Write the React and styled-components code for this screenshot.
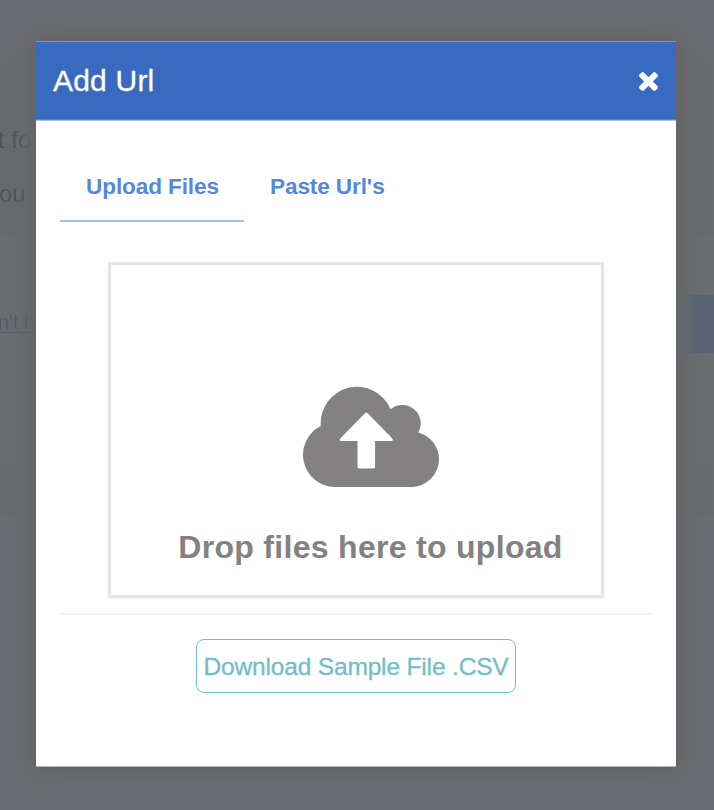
import React from "react";
import styled, { createGlobalStyle } from "styled-components";

const GlobalStyle = createGlobalStyle`
  * { box-sizing: border-box; }
  body {
    margin: 0;
    font-family: "Liberation Sans", Arial, sans-serif;
    overflow: hidden;
  }
`;

const Page = styled.div`
  position: relative;
  width: 714px;
  height: 810px;
  overflow: hidden;
  background: #6a6d71;
`;

const Backdrop = styled.div`
  position: absolute;
  inset: 0;
  display: grid;
  grid-template-rows: 57px 180px 226px 54px 1fr;
`;

const Band = styled.section`
  position: relative;
  background: ${(p) => p.$tone};
`;

const Behind = styled.span`
  position: absolute;
  left: ${(p) => p.$x}px;
  top: ${(p) => p.$y}px;
  font-size: ${(p) => p.$size}px;
  line-height: 28px;
  white-space: nowrap;
  color: transparent;
  background: linear-gradient(to right, ${(p) => p.$color || "#505357"} 20px, #666768 36px);
  background-clip: text;
  -webkit-background-clip: text;
  text-decoration: ${(p) => (p.$underline ? "underline #5a616b" : "none")};
  text-decoration-thickness: 1px;
  text-underline-offset: 3px;
`;

const BehindButton = styled.div`
  position: absolute;
  right: 0;
  top: 58px;
  width: 34px;
  height: 58px;
  background: linear-gradient(to right, #676a6e00, #5b6474 45%, #596476);
`;

const Overlay = styled.div`
  position: relative;
  padding: 41px 38px 43px 36px;
`;

const Dialog = styled.div`
  width: 640px;
  height: 726px;
  background: #fff;
  border-bottom: 1px solid #b5b6b7;
  box-shadow: 0 0 22px 4px rgba(98, 97, 97, 0.95);
`;

const Header = styled.header`
  display: flex;
  align-items: center;
  justify-content: space-between;
  height: 80px;
  padding: 0 18px 0 17px;
  background: #386bc0;
  border-top: 1px solid #7d94b9;
  border-bottom: 1px solid #a9bfe5;
  box-shadow: inset 0 -1px 0 #5a84cc;
`;

const Title = styled.h1`
  margin: 0;
  font-size: 30px;
  font-weight: 400;
  line-height: 40px;
  letter-spacing: 0.2px;
  -webkit-text-stroke: 0.3px #fff;
  color: #fff;
`;

const CloseButton = styled.button`
  display: flex;
  margin: 0;
  padding: 0;
  border: 0;
  background: none;
  color: #fff;
`;

const Body = styled.main`
  padding: 29px 24px 0;
`;

const Tabs = styled.nav`
  display: flex;
  height: 72px;
`;

const Tab = styled.a`
  padding: 22px 26px 0;
  font-size: 22.6px;
  font-weight: 700;
  line-height: 30px;
  letter-spacing: -0.12px;
  white-space: nowrap;
  color: #5588dc;
  border-bottom: 2px solid ${(p) => (p.$active ? "#a3c0ec" : "transparent")};
  width: ${(p) => (p.$active ? "184px" : "auto")};
`;

const DropZone = styled.section`
  display: flex;
  flex-direction: column;
  align-items: center;
  width: 496px;
  height: 336px;
  margin: 40px auto 0;
  padding: 121px 0 0 29px;
  border: 3px solid #e4e4e4;
`;

const DropLabel = styled.p`
  margin: 39px 0 0;
  font-size: 32px;
  font-weight: 700;
  line-height: 40px;
  letter-spacing: 0.3px;
  white-space: nowrap;
  color: #838182;
`;

const Divider = styled.hr`
  height: 2px;
  margin: 15px 0 24px;
  border: 0;
  background: #f5f5f5;
`;

const Download = styled.button`
  display: flex;
  align-items: center;
  justify-content: center;
  width: 320px;
  height: 54px;
  margin: 0 auto;
  padding: 2px 0 0;
  border: 1px solid #73bfcc;
  border-radius: 8px;
  background: #fff;
  font-family: inherit;
  font-size: 24.5px;
  letter-spacing: -0.16px;
  -webkit-text-stroke: 0.3px #73bccb;
  white-space: nowrap;
  color: #73bccb;
`;

function CloseIcon() {
  return (
    <svg width="19" height="19" viewBox="302 366 1188 1188" fill="currentColor">
      <path d="M1490 1322q0 40-28 68l-136 136q-28 28-68 28t-68-28l-294-294-294 294q-28 28-68 28t-68-28l-136-136q-28-28-28-68t28-68l294-294-294-294q-28-28-28-68t28-68l136-136q28-28 68-28t68 28l294 294 294-294q28-28 68-28t68 28l136 136q28 28 28 68t-28 68l-294 294 294 294q28 28 28 68z" />
    </svg>
  );
}

function CloudUploadIcon() {
  return (
    <svg width="138" height="102" viewBox="302 386 138 102">
      <path
        fill="#838182"
        d="M334.5 487A32.2 32.2 0 0 1 320.8 426A36.3 36.3 0 0 1 390.5 409.2A18.4 18.4 0 0 1 418.3 432.4A27.8 27.8 0 0 1 439 459.2A27.8 27.8 0 0 1 411.2 487Z"
      />
      <path
        fill="#fff"
        d="M365.2 413.1Q366.3 412.1 367.4 413.1L392.3 438.6Q393.9 441 391.5 441H375.1V466.8Q375.1 468.5 373.4 468.5H359.2Q357.5 468.5 357.5 466.8V441H341Q338.8 441 340.3 438.6Z"
      />
    </svg>
  );
}

export default function App() {
  return (
    <Page>
      <GlobalStyle />
      <Backdrop>
        <Band $tone="#6a6d71" />
        <Band $tone="#696c6f">
          <Behind $x={-2} $y={69} $size={24}>t fo</Behind>
          <Behind $x={-1} $y={123} $size={24}>ou</Behind>
        </Band>
        <Band $tone="#6a6e71">
          <Behind $x={-2} $y={71} $size={20} $color="#525c69" $underline>n't h</Behind>
          <BehindButton />
        </Band>
        <Band $tone="#696c6f" />
        <Band $tone="#6a6d71" />
      </Backdrop>
      <Overlay>
        <Dialog role="dialog" aria-label="Add Url">
          <Header>
            <Title>Add Url</Title>
            <CloseButton aria-label="Close"><CloseIcon /></CloseButton>
          </Header>
          <Body>
            <Tabs>
              <Tab $active>Upload Files</Tab>
              <Tab>Paste Url's</Tab>
            </Tabs>
            <DropZone>
              <CloudUploadIcon />
              <DropLabel>Drop files here to upload</DropLabel>
            </DropZone>
            <Divider />
            <Download>Download Sample File .CSV</Download>
          </Body>
        </Dialog>
      </Overlay>
    </Page>
  );
}
